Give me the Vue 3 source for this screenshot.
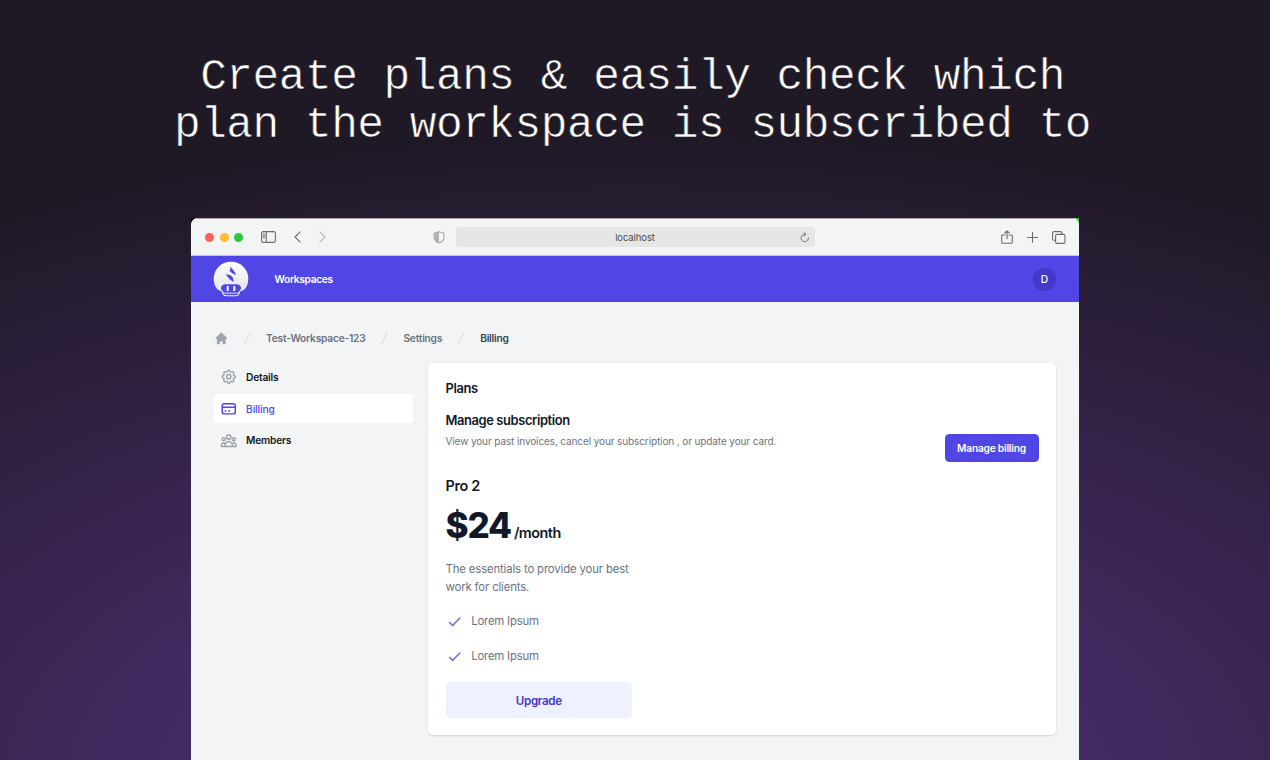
<template>
  <div class="stage">
    <h1 class="headline">Create plans &amp; easily check which<br>plan the workspace is subscribed to</h1>
    <div class="frame">
      <div class="browser">
        <div class="toolbar">
          <div class="tools-left">
            <span class="dot red"></span>
            <span class="dot yellow"></span>
            <span class="dot green"></span>
            <svg class="panel-icon" viewBox="0 0 15 12">
              <rect x=".6" y=".6" width="13.8" height="10.8" rx="1.6" />
              <path d="M5.3 .6v10.8M2.2 3h1.5M2.2 4.9h1.5M2.2 6.8h1.5" />
            </svg>
            <svg class="chevron" viewBox="0 0 7 12"><path d="M6.2 .9L1 6l5.2 5.1" /></svg>
            <svg class="chevron faded" viewBox="0 0 7 12"><path d="M.8 .9L6 6 .8 11.1" /></svg>
          </div>
          <svg class="shield" viewBox="0 0 12 13">
            <path d="M6 .8L10.9 2.3v4.6c0 2.4-2.3 4-4.9 5.2C3.4 10.9 1.1 9.3 1.1 6.9V2.3z" />
            <path class="half" d="M6 .8v11.3C3.4 10.9 1.1 9.3 1.1 6.9V2.3z" />
          </svg>
          <div class="address">
            <span>localhost</span>
            <svg class="reload" viewBox="0 0 10 11">
              <path d="M8.5 5.7A3.7 3.7 0 1 1 5.4 2.3M3.9 .6l2 1.7-1.7 1.9" />
            </svg>
          </div>
          <div class="tools-right">
            <svg class="share" viewBox="0 0 12 14">
              <path d="M3.9 5H1.6c-.5 0-.9.4-.9.9v6.3c0 .6.4 1 1 1h8.6c.6 0 1-.4 1-1V5.9c0-.5-.4-.9-.9-.9H8.1M6 8.8V1M3.8 3L6 .8 8.2 3" />
            </svg>
            <svg class="plus" viewBox="0 0 11 11"><path d="M5.5 .5v10M.5 5.5h10" /></svg>
            <svg class="tabs" viewBox="0 0 14 13">
              <path d="M3.5 9.3H2A1.4 1.4 0 0 1 .6 7.9V2A1.4 1.4 0 0 1 2 .6h6.5A1.4 1.4 0 0 1 9.9 2v1.3" />
              <rect x="3.6" y="3.4" width="9.4" height="9" rx="1.4" />
            </svg>
          </div>
        </div>

        <nav class="navbar">
          <svg class="logo" viewBox="0 0 36 36">
            <defs>
              <linearGradient id="cap" x1="0" y1="0" x2="0" y2="1">
                <stop offset="0" stop-color="#fff" />
                <stop offset="1" stop-color="#e4e4ea" />
              </linearGradient>
            </defs>
            <path fill="url(#cap)" d="M18 .7C8.3 .7 .7 8.2 .7 17.7c0 5.8 2.3 10.1 6 12h22.6c3.7-1.900 6-6.200 6-12C35.3 8.2 27.7 .7 18 .7z" />
            <path fill="#4f46e5" stroke="#f4f4fb" stroke-width="1.1" d="M12.500 22.800h11c3.200 0 5.300 2 5.100 4.500-.1 1.600-.9 2.500-1.800 3-.3 3.200-1.900 4.500-4.600 4.500h-8.400c-2.700 0-4.300-1.300-4.600-4.500-.9-.5-1.700-1.400-1.800-3-.2-2.500 1.900-4.500 5.100-4.500z" />
            <path stroke="#f4f4fb" stroke-width=".9" d="M9.400 30.700c1.300 1.200 2.300 1.500 4.100 1.500h9c1.800 0 2.800-.3 4.100-1.500" />
            <path stroke="#fff" stroke-width="2" stroke-linecap="round" d="M14.700 25.700v3.500M21.300 25.700v3.500" />
            <path fill="#4f46e5" d="M17.2 5.600l3 3.300 1.400 2.100 1.600 3.300-4-2.100-3.300-3 1.600-.1zM13 13.200l4.700 1 2.300 2.500.7 4.200-3.500-2.200-3.300-3.700z" />
          </svg>
          <a class="nav-link">Workspaces</a>
          <span class="avatar">D</span>
        </nav>

        <main class="page">
          <ol class="breadcrumb">
            <li>
              <svg class="home" viewBox="0 0 20 20">
                <path d="M10.707 2.293a1 1 0 00-1.414 0l-7 7a1 1 0 001.414 1.414L4 10.414V17a1 1 0 001 1h2a1 1 0 001-1v-2a1 1 0 011-1h2a1 1 0 011 1v2a1 1 0 001 1h2a1 1 0 001-1v-6.586l.293.293a1 1 0 001.414-1.414l-7-7z" />
              </svg>
            </li>
            <li v-for="crumb in crumbs" :key="crumb.label">
              <svg class="slash" viewBox="0 0 20 20"><path d="M5.555 17.776l8-16 .894.448-8 16-.894-.448z" /></svg>
              <a :class="{ current: crumb.current }">{{ crumb.label }}</a>
            </li>
          </ol>

          <div class="columns">
            <aside class="sidebar">
              <a v-for="item in menu" :key="item.label" class="menu-item" :class="{ active: item.active }">
                <svg viewBox="0 0 24 24"><path v-for="d in item.paths" :key="d" :d="d" /></svg>
                <span>{{ item.label }}</span>
              </a>
            </aside>

            <section class="card">
              <h2>Plans</h2>
              <div class="subscription">
                <div>
                  <h3>Manage subscription</h3>
                  <p>View your past invoices, cancel your subscription , or update your card.</p>
                </div>
                <button class="manage">Manage billing</button>
              </div>
              <div class="plan">
                <h4>Pro 2</h4>
                <p class="price"><strong>$24</strong><span>/month</span></p>
                <p class="description">The essentials to provide your best work for clients.</p>
                <ul>
                  <li v-for="(feature, i) in features" :key="i">
                    <svg viewBox="0 0 24 24"><path d="M5 13l4 4L19 7" /></svg>
                    <span>{{ feature }}</span>
                  </li>
                </ul>
                <button class="upgrade">Upgrade</button>
              </div>
            </section>
          </div>
        </main>
      </div>
    </div>
  </div>
</template>

<script setup>
const crumbs = [
  { label: 'Test-Workspace-123' },
  { label: 'Settings' },
  { label: 'Billing', current: true },
];

const menu = [
  {
    label: 'Details',
    paths: [
      'M10.325 4.317c.426-1.756 2.924-1.756 3.35 0a1.724 1.724 0 002.573 1.066c1.543-.94 3.31.826 2.37 2.37a1.724 1.724 0 001.065 2.572c1.756.426 1.756 2.924 0 3.35a1.724 1.724 0 00-1.066 2.573c.94 1.543-.826 3.31-2.37 2.37a1.724 1.724 0 00-2.572 1.065c-.426 1.756-2.924 1.756-3.35 0a1.724 1.724 0 00-2.573-1.066c-1.543.94-3.31-.826-2.37-2.37a1.724 1.724 0 00-1.065-2.572c-1.756-.426-1.756-2.924 0-3.35a1.724 1.724 0 001.066-2.573c-.94-1.543.826-3.31 2.37-2.37.996.608 2.296.07 2.572-1.065z',
      'M15 12a3 3 0 11-6 0 3 3 0 016 0z',
    ],
  },
  {
    label: 'Billing',
    active: true,
    paths: ['M3 10h18M7 15h1m4 0h1m-7 4h12a3 3 0 003-3V8a3 3 0 00-3-3H6a3 3 0 00-3 3v8a3 3 0 003 3z'],
  },
  {
    label: 'Members',
    paths: ['M17 20h5v-2a3 3 0 00-5.356-1.857M17 20H7m10 0v-2c0-.656-.126-1.283-.356-1.857M7 20H2v-2a3 3 0 015.356-1.857M7 20v-2c0-.656.126-1.283.356-1.857m0 0a5.002 5.002 0 019.288 0M15 7a3 3 0 11-6 0 3 3 0 016 0zm6 3a2 2 0 11-4 0 2 2 0 014 0zM7 10a2 2 0 11-4 0 2 2 0 014 0z'],
  },
];

const features = ['Lorem Ipsum', 'Lorem Ipsum'];
</script>

<style>
body {
  margin: 0;
  overflow: hidden;
}
</style>

<style scoped>
* {
  box-sizing: border-box;
}
h1, h2, h3, h4, p, ul, ol {
  margin: 0;
  padding: 0;
  list-style: none;
}
svg {
  display: block;
  flex: none;
  fill: none;
}
button {
  border: 0;
  padding: 0;
  font-family: inherit;
}
.stage {
  height: 760px;
  overflow: hidden;
  display: flex;
  flex-direction: column;
  align-items: center;
  background: radial-gradient(ellipse 1290px 660px at 635px 790px, #573485 0%, #1f1926 100%);
  font-family: Inter, sans-serif;
}
.headline {
  height: 218px;
  padding-top: 53px;
  padding-right: 5px;
  flex: none;
  font: 400 44.5px/48px "Liberation Mono", monospace;
  letter-spacing: -0.5px;
  text-align: center;
  white-space: nowrap;
  color: #fff;
  -webkit-text-stroke: 0.6px #1f1926;
}
.frame {
  width: 888px;
  height: 542px;
  flex: none;
  background: linear-gradient(90deg, #000 0 50%, #3fc93a 50%);
}
.browser {
  height: 542px;
  border-radius: 7px 7px 0 0;
  overflow: hidden;
  background: #f3f4f6;
}
.toolbar {
  height: 38px;
  display: grid;
  grid-template-columns: 242px 12px 11px 359px 1fr;
  align-items: center;
  background: #f3f5f4;
  border-top: 1px solid #a9a6ad;
  border-bottom: 1px solid #c3c2dc;
}
.tools-left {
  display: flex;
  align-items: center;
  padding-left: 14px;
}
.dot {
  width: 9px;
  height: 9px;
  border-radius: 50%;
  margin-right: 5.5px;
}
.red { background: #ff5f57; }
.yellow { background: #febc2e; }
.green { background: #28c840; }
.toolbar svg {
  stroke: #6b6d6c;
  stroke-width: 1.1;
  stroke-linecap: round;
  stroke-linejoin: round;
}
.panel-icon {
  width: 15px;
  height: 12px;
  margin-left: 12.5px;
}
.chevron {
  width: 7px;
  height: 12px;
  margin-left: 18px;
}
.toolbar .chevron.faded {
  stroke: #b7b9b8;
}
.toolbar .shield {
  width: 12px;
  height: 13px;
  stroke: #a6a8a7;
}
.shield .half {
  fill: #b0b2b1;
  stroke: none;
}
.address {
  grid-column: 4;
  height: 20px;
  display: grid;
  grid-template-columns: 1fr auto 1fr;
  align-items: center;
  padding: 1px 5px 0 4px;
  border-radius: 4px;
  background: #e5e7e6;
  font-size: 9.5px;
  letter-spacing: -0.1px;
  color: #4b4d4c;
}
.address span {
  grid-column: 2;
}
.toolbar .reload {
  width: 10px;
  height: 11px;
  justify-self: end;
  stroke-width: 0.9;
}
.tools-right {
  display: flex;
  align-items: center;
  justify-content: flex-end;
  padding-right: 13px;
}
.share {
  width: 12px;
  height: 14px;
}
.plus {
  width: 11px;
  height: 11px;
  margin: 0 14px;
}
.tabs {
  width: 14px;
  height: 13px;
}
.navbar {
  height: 46px;
  display: flex;
  align-items: center;
  padding: 0 23px 0 22px;
  background: #4f46e5;
}
.logo {
  width: 36px;
  height: 36px;
}
.nav-link {
  margin-left: 25.5px;
  font-size: 10.2px;
  font-weight: 600;
  letter-spacing: -0.32px;
  color: #fff;
}
.avatar {
  width: 23px;
  height: 23px;
  margin-left: auto;
  border-radius: 50%;
  background: #4338ca;
  display: flex;
  align-items: center;
  justify-content: center;
  font-size: 10.2px;
  font-weight: 500;
  color: #fff;
}
.page {
  padding: 29px 23px 0 22.5px;
}
.breadcrumb,
.breadcrumb li {
  display: flex;
  align-items: center;
}
.breadcrumb {
  height: 14px;
  font-size: 10.2px;
  font-weight: 600;
  letter-spacing: -0.21px;
  color: #6b7280;
}
.breadcrumb svg {
  width: 14.6px;
  height: 14.6px;
}
.home {
  fill: #9ca3af;
}
.breadcrumb .slash {
  margin: 0 11.7px;
  fill: #d1d5db;
}
.current {
  color: #374151;
}
.columns {
  margin-top: 17.5px;
  display: grid;
  grid-template-columns: 199.5px 628px;
  gap: 14.5px;
  align-items: start;
}
.sidebar {
  display: grid;
  gap: 2.7px;
}
.menu-item {
  height: 29px;
  display: flex;
  align-items: center;
  gap: 8.7px;
  padding-left: 6.4px;
  border-radius: 4px;
  font-size: 10.2px;
  font-weight: 600;
  letter-spacing: -0.22px;
  color: #111827;
}
.menu-item svg {
  width: 17.5px;
  height: 17.5px;
  stroke: #9ca3af;
  stroke-width: 2;
  stroke-linecap: round;
  stroke-linejoin: round;
}
.menu-item.active {
  background: #fff;
  font-weight: 500;
  letter-spacing: -0.12px;
  color: #4f46e5;
}
.menu-item.active svg {
  stroke: #4f46e5;
}
.card {
  height: 372.5px;
  padding: 17.5px 17px 17.5px 18px;
  border-radius: 4.5px;
  background: #fff;
  box-shadow: 0 1px 2px rgba(0, 0, 0, 0.12), 0 0 1px rgba(0, 0, 0, 0.1);
  color: #111827;
}
.card h2,
.card h3 {
  font-size: 12.9px;
  line-height: 17.5px;
  font-weight: 600;
  letter-spacing: -0.38px;
}
.subscription {
  height: 50px;
  margin-top: 14px;
  display: flex;
  justify-content: space-between;
}
.subscription p {
  margin-top: 5px;
  font-size: 10px;
  line-height: 14.6px;
  letter-spacing: -0.11px;
  color: #6b7280;
}
.manage {
  width: 94px;
  height: 28px;
  margin-top: 22.5px;
  border-radius: 4.5px;
  background: #4f46e5;
  font-size: 10.2px;
  font-weight: 600;
  letter-spacing: -0.22px;
  color: #fff;
}
.plan {
  width: 187px;
  margin-top: 15.5px;
}
.plan h4 {
  font-size: 14.4px;
  line-height: 17.5px;
  font-weight: 600;
  letter-spacing: -0.35px;
}
.price {
  margin-top: 11.5px;
  display: flex;
  align-items: baseline;
  line-height: 38px;
}
.price strong {
  font-size: 35px;
  font-weight: 850;
  letter-spacing: -1.2px;
}
.price span {
  margin-left: 3px;
  font-size: 14.4px;
  font-weight: 600;
  letter-spacing: -0.5px;
}
.description {
  margin-top: 9px;
  font-size: 11.4px;
  line-height: 17.5px;
  letter-spacing: -0.16px;
  color: #6b7280;
}
.plan ul {
  margin-top: 16.8px;
  display: grid;
  gap: 17.5px;
}
.plan li {
  display: flex;
  align-items: center;
  gap: 8.2px;
  font-size: 11.4px;
  line-height: 17.5px;
  letter-spacing: -0.22px;
  color: #6b7280;
}
.plan li svg {
  width: 17.5px;
  height: 17.5px;
  stroke: #6366f1;
  stroke-width: 2;
  stroke-linecap: round;
  stroke-linejoin: round;
}
.upgrade {
  width: 186.5px;
  height: 35.5px;
  margin-top: 17px;
  padding-top: 1px;
  border-radius: 4.5px;
  background: #eef2ff;
  font-size: 11.6px;
  font-weight: 600;
  letter-spacing: -0.35px;
  color: #4338ca;
}
</style>
